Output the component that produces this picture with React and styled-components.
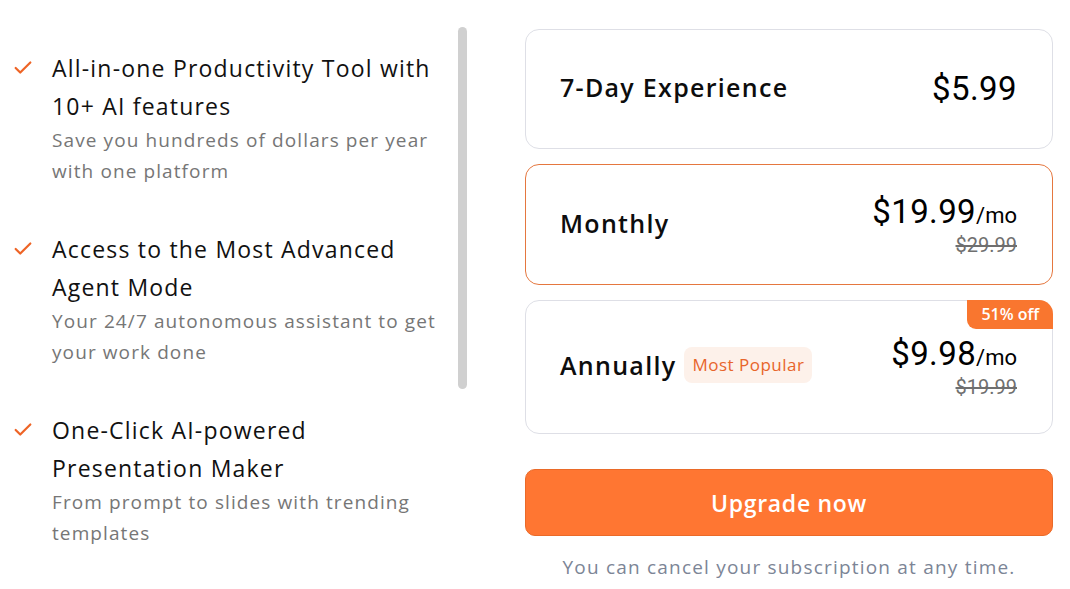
import React from 'react';
import styled, { createGlobalStyle } from 'styled-components';
import { Check } from 'lucide-react';

const GlobalStyle = createGlobalStyle`
  html, body {
    margin: 0;
    padding: 0;
    background: #ffffff;
    font-family: "Open Sans", "Noto Sans", sans-serif;
  }
`;

const Page = styled.div`
  display: flex;
  width: 1070px;
  height: 589px;
  overflow: hidden;
  box-sizing: border-box;
  padding-top: 27px;
`;

const Features = styled.div`
  display: flex;
  width: 470px;
  flex-shrink: 0;
`;

const FeatureList = styled.ul`
  list-style: none;
  margin: 0;
  padding: 22px 0 0 12px;
  width: 446px;
  display: flex;
  flex-direction: column;
  gap: 43px;
`;

const Feature = styled.li`
  display: flex;
  gap: 18px;
`;

const Tick = styled.span`
  width: 22px;
  height: 38px;
  display: flex;
  align-items: center;
  flex-shrink: 0;
  color: #ee6426;
`;

const FeatureText = styled.div`
  display: flex;
  flex-direction: column;
  white-space: nowrap;
`;

const FeatureTitle = styled.div`
  font-size: 23px;
  font-weight: 500;
  line-height: 38px;
  letter-spacing: 1.2px;
  color: #111111;
`;

const FeatureDesc = styled.div`
  font-size: 19px;
  line-height: 31px;
  letter-spacing: 1.1px;
  color: #767676;
`;

const ScrollThumb = styled.div`
  width: 9px;
  height: 362px;
  border-radius: 5px;
  background: #d0d0d0;
`;

const Plans = styled.div`
  margin: 2px 0 0 55px;
  width: 528px;
  display: flex;
  flex-direction: column;
  gap: 15px;
`;

const Card = styled.div`
  position: relative;
  box-sizing: border-box;
  height: ${(p) => p.$h}px;
  border: 1px solid ${(p) => (p.$active ? '#e5773f' : '#dedfe6')};
  border-radius: 14px;
  background: #fff;
  display: flex;
  align-items: center;
  justify-content: space-between;
  padding: 0 35px 0 34px;
`;

const PlanName = styled.div`
  display: flex;
  align-items: center;
  gap: 8px;
  padding-bottom: 4px;
  font-size: 25px;
  font-weight: 600;
  letter-spacing: 1.3px;
  color: #0d0d0d;
`;

const Popular = styled.span`
  font-size: 17px;
  font-weight: 400;
  letter-spacing: 0.5px;
  color: #e8652a;
  background: #fdf1ea;
  border-radius: 8px;
  padding: 6px 8px 7px;
`;

const PriceBlock = styled.div`
  display: flex;
  flex-direction: column;
  align-items: flex-end;
  font-family: Roboto, "Liberation Sans", sans-serif;
`;

const Price = styled.div`
  font-size: 33px;
  letter-spacing: 0.4px;
  color: #000;
  line-height: 36px;
`;

const PerMonth = styled.span`
  font-size: 22px;
  letter-spacing: 0;
`;

const OldPrice = styled.s`
  font-size: 20px;
  line-height: 22px;
  color: #6f6f6f;
`;

const OffBadge = styled.div`
  position: absolute;
  top: -1px;
  right: -1px;
  background: #f9762f;
  color: #fff;
  font-size: 16px;
  font-weight: 600;
  padding: 3px 14px 4px;
  border-radius: 0 14px 0 9px;
`;

const Upgrade = styled.button`
  margin-top: 20px;
  height: 67px;
  border: 1px solid #ea6a28;
  border-radius: 10px;
  background: #ff7632;
  color: #fff;
  font-family: "Open Sans", sans-serif;
  font-size: 23px;
  font-weight: 600;
  letter-spacing: 0.7px;
  cursor: pointer;
`;

const Note = styled.p`
  margin: 3px 0 0;
  text-align: center;
  font-size: 19px;
  letter-spacing: 1.2px;
  color: #7c8596;
`;

const features = [
  {
    title: ['All-in-one Productivity Tool with', '10+ AI features'],
    desc: ['Save you hundreds of dollars per year', 'with one platform'],
  },
  {
    title: ['Access to the Most Advanced', 'Agent Mode'],
    desc: ['Your 24/7 autonomous assistant to get', 'your work done'],
  },
  {
    title: ['One-Click AI-powered', 'Presentation Maker'],
    desc: ['From prompt to slides with trending', 'templates'],
  },
];

export default function App() {
  return (
    <>
      <GlobalStyle />
      <Page>
        <Features>
          <FeatureList>
            {features.map((f) => (
              <Feature key={f.title[0]}>
                <Tick>
                  <Check size={22} strokeWidth={2.4} />
                </Tick>
                <FeatureText>
                  {f.title.map((l) => (
                    <FeatureTitle key={l}>{l}</FeatureTitle>
                  ))}
                  {f.desc.map((l) => (
                    <FeatureDesc key={l}>{l}</FeatureDesc>
                  ))}
                </FeatureText>
              </Feature>
            ))}
          </FeatureList>
          <ScrollThumb />
        </Features>

        <Plans>
          <Card $h={120}>
            <PlanName>7-Day Experience</PlanName>
            <PriceBlock>
              <Price>$5.99</Price>
            </PriceBlock>
          </Card>
          <Card $h={121} $active>
            <PlanName>Monthly</PlanName>
            <PriceBlock>
              <Price>
                $19.99<PerMonth>/mo</PerMonth>
              </Price>
              <OldPrice>$29.99</OldPrice>
            </PriceBlock>
          </Card>
          <Card $h={134}>
            <OffBadge>51% off</OffBadge>
            <PlanName>
              Annually<Popular>Most Popular</Popular>
            </PlanName>
            <PriceBlock>
              <Price>
                $9.98<PerMonth>/mo</PerMonth>
              </Price>
              <OldPrice>$19.99</OldPrice>
            </PriceBlock>
          </Card>
          <Upgrade>Upgrade now</Upgrade>
          <Note>You can cancel your subscription at any time.</Note>
        </Plans>
      </Page>
    </>
  );
}
